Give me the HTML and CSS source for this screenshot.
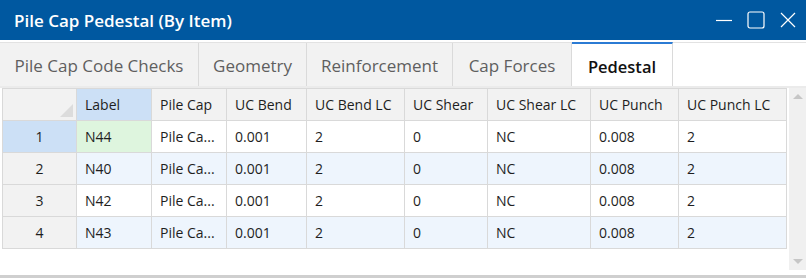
FILE: index.html
```html
<!DOCTYPE html>
<html lang="en">
<head>
    <meta charset="UTF-8">
    <title>Pile Cap Pedestal (By Item)</title>
    <link rel="stylesheet" href="styles.css">
</head>
<body>

<div class="window">
    <div class="titlebar">
        <span class="title">Pile Cap Pedestal (By Item)</span>
        <div class="controls">
            <svg width="18" height="18" viewBox="0 0 18 18"><path d="M1 9.5h16" stroke="#fff" stroke-width="1.2" fill="none"/></svg>
            <svg width="18" height="18" viewBox="0 0 18 18"><rect x="1" y="1" width="16" height="16" rx="2" stroke="#fff" stroke-width="1.2" fill="none"/></svg>
            <svg width="18" height="18" viewBox="0 0 18 18"><path d="M2 2l14 14M16 2L2 16" stroke="#fff" stroke-width="1.2" fill="none"/></svg>
        </div>
    </div>

    <div class="tabbar">
        <div class="tab" style="width:199px">Pile Cap Code Checks</div>
        <div class="tab" style="width:108px">Geometry</div>
        <div class="tab" style="width:146px">Reinforcement</div>
        <div class="tab" style="width:119px">Cap Forces</div>
        <div class="tab active" style="width:101px">Pedestal</div>
    </div>

    <div class="body">
        <table class="grid">
            <colgroup>
                <col style="width:74px"><col style="width:75px"><col style="width:75px">
                <col style="width:80px"><col style="width:98px"><col style="width:83px">
                <col style="width:103px"><col style="width:88px"><col style="width:108px">
            </colgroup>
            <thead>
                <tr>
                    <th class="corner"><span class="tri"></span></th>
                    <th class="sel">Label</th>
                    <th>Pile Cap</th>
                    <th>UC Bend</th>
                    <th>UC Bend LC</th>
                    <th>UC Shear</th>
                    <th>UC Shear LC</th>
                    <th>UC Punch</th>
                    <th>UC Punch LC</th>
                </tr>
            </thead>
            <tbody>
                <tr>
                    <td class="rowhead sel">1</td>
                    <td class="current">N44</td>
                    <td>Pile Ca...</td><td>0.001</td><td>2</td><td>0</td><td>NC</td><td>0.008</td><td>2</td>
                </tr>
                <tr class="alt">
                    <td class="rowhead">2</td>
                    <td>N40</td>
                    <td>Pile Ca...</td><td>0.001</td><td>2</td><td>0</td><td>NC</td><td>0.008</td><td>2</td>
                </tr>
                <tr>
                    <td class="rowhead">3</td>
                    <td>N42</td>
                    <td>Pile Ca...</td><td>0.001</td><td>2</td><td>0</td><td>NC</td><td>0.008</td><td>2</td>
                </tr>
                <tr class="alt">
                    <td class="rowhead">4</td>
                    <td>N43</td>
                    <td>Pile Ca...</td><td>0.001</td><td>2</td><td>0</td><td>NC</td><td>0.008</td><td>2</td>
                </tr>
            </tbody>
        </table>

        <div class="vscroll">
            <span class="arrow up"></span>
            <span class="arrow down"></span>
        </div>
    </div>

    <div class="hscroll"></div>
</div>

</body>
</html>
```

FILE: styles.css
```css
body {
    margin: 0;
    padding: 0;
    background: #fff;
    font-family: 'Open Sans', 'Noto Sans', sans-serif;
    overflow: hidden;
}

.window {
    width: 806px;
    height: 278px;
    display: flex;
    flex-direction: column;
}

.titlebar {
    height: 40px;
    background: #0058a0;
    display: flex;
    align-items: center;
    justify-content: space-between;
    padding: 0 9px 0 14px;
}

.title {
    color: #fff;
    font-size: 17px;
    font-weight: 600;
}

.controls {
    display: flex;
    gap: 14px;
}

.tabbar {
    margin-top: 2px;
    border-top: 1px solid #e2e2e2;
    height: 43px;
    display: flex;
    border-bottom: 2px solid #ebebeb;
}

.tab {
    background: #f2f2f2;
    border-right: 1px solid #dadada;
    color: #5f5f5f;
    font-size: 17px;
    padding-top: 2px;
    display: flex;
    align-items: center;
    justify-content: center;
    box-sizing: border-box;
    white-space: nowrap;
}

.tab.active {
    background: #fff;
    color: #111;
    font-weight: 600;
    font-size: 16.5px;
    border-top: 2px solid #2b7bd4;
    margin-top: -1px;
}

.body {
    flex: 1;
    display: flex;
    justify-content: space-between;
    padding-left: 2px;
}

.grid {
    border-collapse: collapse;
    table-layout: fixed;
    width: 784px;
    align-self: flex-start;
    font-size: 14px;
    color: #1e1e1e;
}

.grid th, .grid td {
    border: 1px solid #d9d9d9;
    height: 32px;
    padding: 0 0 0 8px;
    text-align: left;
    white-space: nowrap;
    overflow: hidden;
    box-sizing: border-box;
}

.grid th {
    background: #f2f2f2;
    font-weight: 400;
}

.grid th.sel, .grid td.sel {
    background: #cce0f6;
}

.grid .corner {
    position: relative;
}

.tri {
    position: absolute;
    right: 3px;
    bottom: 3px;
    width: 0;
    height: 0;
    border-left: 13px solid transparent;
    border-bottom: 13px solid #dcdcdc;
}

.grid td.rowhead {
    background: #f2f2f2;
    text-align: center;
    padding: 0;
}

.grid td.rowhead.sel {
    background: #cce0f6;
}

.grid tr.alt td {
    background: #eef5fd;
}

.grid tr.alt td.rowhead {
    background: #f2f2f2;
}

.grid td.current {
    background: #def5de;
}

.vscroll {
    width: 17px;
    height: 182px;
    background: #f0f0f0;
    display: flex;
    flex-direction: column;
    justify-content: space-between;
    align-items: center;
    padding: 6px 0;
    box-sizing: border-box;
}

.arrow {
    width: 0;
    height: 0;
    border-left: 5px solid transparent;
    border-right: 5px solid transparent;
}

.arrow.up {
    border-bottom: 5px solid #c6c6c6;
}

.arrow.down {
    border-top: 5px solid #c6c6c6;
}

.hscroll {
    height: 3px;
    background: #cfcfcf;
}
```
